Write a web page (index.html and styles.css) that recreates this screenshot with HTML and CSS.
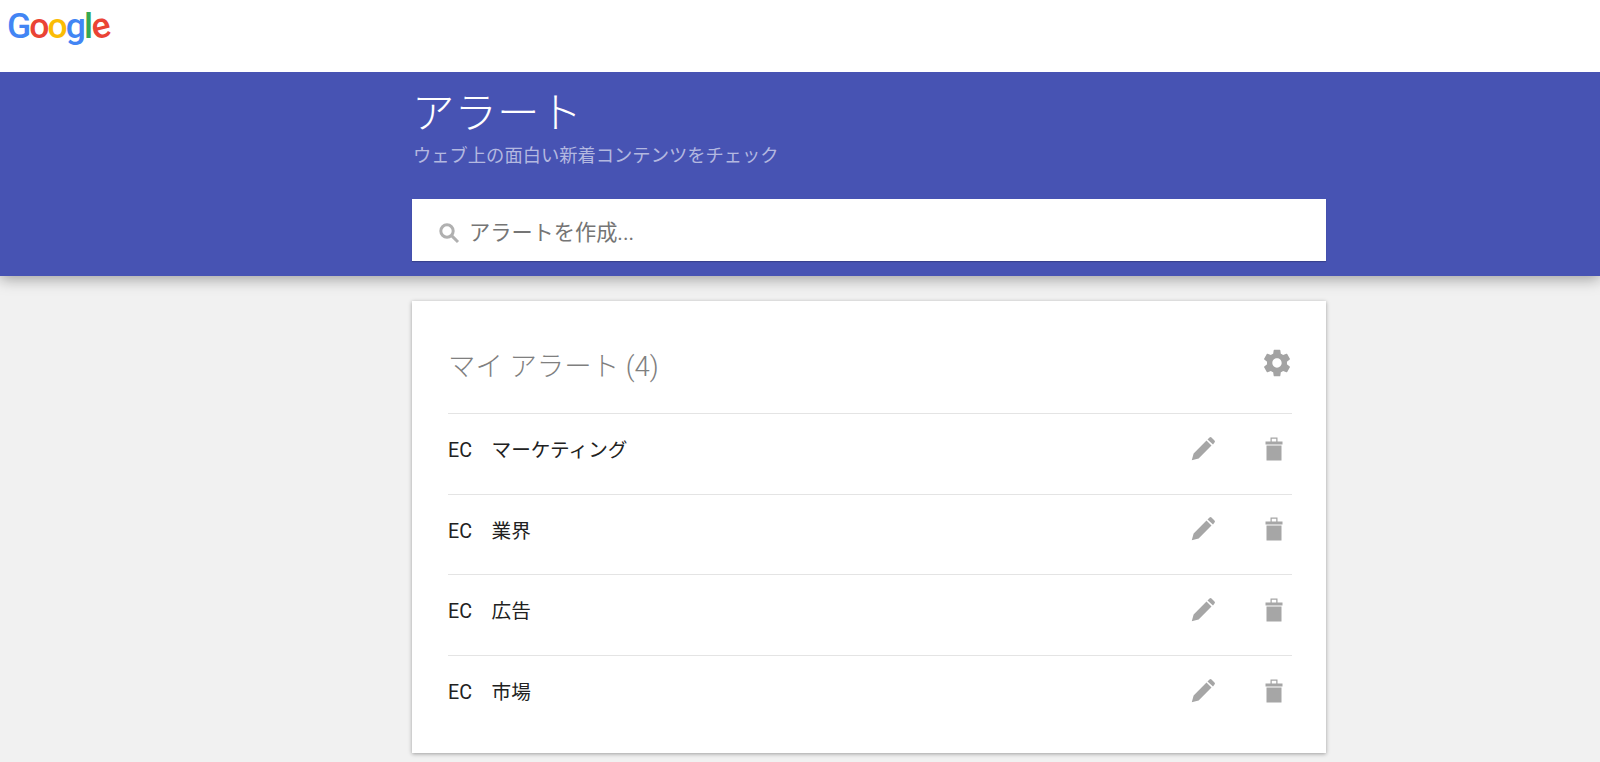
FILE: index.html
```html
<!DOCTYPE html>
<html lang="ja">
<head>
    <meta charset="UTF-8" />
    <title>Google アラート</title>
    <link rel="stylesheet" href="styles.css">
</head>
<body>
    <div class="topbar">
        <div class="logo"><span class="blue">G</span><span class="red">o</span><span class="yellow">o</span><span class="blue">g</span><span class="green">l</span><span class="red tilt">e</span></div>
    </div>

    <header class="hero">
        <div class="column">
            <h1>アラート</h1>
            <p class="subtitle">ウェブ上の面白い新着コンテンツをチェック</p>
            <div class="search">
                <svg class="search-icon" viewBox="0 0 24 24"><circle cx="10" cy="10" r="6.2"/><line x1="14.6" y1="14.6" x2="21" y2="21"/></svg>
                <span>アラートを作成...</span>
            </div>
        </div>
    </header>

    <main class="column card">
        <div class="card-head">
            <h2>マイ アラート (4)</h2>
            <svg class="gear" viewBox="0 0 24 24"><path d="M19.43 12.98c.04-.32.07-.64.07-.98s-.03-.66-.07-.98l2.11-1.65c.19-.15.24-.42.12-.64l-2-3.46c-.12-.22-.39-.3-.61-.22l-2.49 1c-.52-.4-1.08-.73-1.69-.98l-.38-2.65A.49.49 0 0 0 14 2h-4c-.25 0-.46.18-.49.42l-.38 2.65c-.61.25-1.17.59-1.69.98l-2.49-1c-.23-.09-.49 0-.61.22l-2 3.46c-.13.22-.07.49.12.64l2.11 1.65c-.04.32-.07.65-.07.98s.03.66.07.98l-2.11 1.65c-.19.15-.24.42-.12.64l2 3.46c.12.22.39.3.61.22l2.49-1c.52.4 1.08.73 1.69.98l.38 2.65c.03.24.24.42.49.42h4c.25 0 .46-.18.49-.42l.38-2.65c.61-.25 1.17-.59 1.69-.98l2.49 1c.23.09.49 0 .61-.22l2-3.46c.12-.22.07-.49-.12-.64l-2.11-1.65zM12 15.5c-1.93 0-3.5-1.57-3.5-3.5s1.57-3.5 3.5-3.5 3.5 1.57 3.5 3.5-1.57 3.5-3.5 3.5z"/></svg>
        </div>
        <div class="row">
            <span class="name">EC　マーケティング</span>
            <svg class="icon" viewBox="0 0 24 24"><path d="M3 21l1.5-5.5L14.8 5.2l4 4L8.5 19.5zM15.6 4.4l1.6-1.6q.8-.8 1.6 0l2.4 2.4q.8.8 0 1.6L20 8.4z"/></svg>
            <svg class="icon" viewBox="0 0 24 24"><path d="M6 9.2h12v12H6zM5.2 6h13.6v2.4H5.2zM9.2 6V2.8h5.6V6h-1V3.8h-3.6V6z"/></svg>
        </div>
        <div class="row">
            <span class="name">EC　業界</span>
            <svg class="icon" viewBox="0 0 24 24"><path d="M3 21l1.5-5.5L14.8 5.2l4 4L8.5 19.5zM15.6 4.4l1.6-1.6q.8-.8 1.6 0l2.4 2.4q.8.8 0 1.6L20 8.4z"/></svg>
            <svg class="icon" viewBox="0 0 24 24"><path d="M6 9.2h12v12H6zM5.2 6h13.6v2.4H5.2zM9.2 6V2.8h5.6V6h-1V3.8h-3.6V6z"/></svg>
        </div>
        <div class="row">
            <span class="name">EC　広告</span>
            <svg class="icon" viewBox="0 0 24 24"><path d="M3 21l1.5-5.5L14.8 5.2l4 4L8.5 19.5zM15.6 4.4l1.6-1.6q.8-.8 1.6 0l2.4 2.4q.8.8 0 1.6L20 8.4z"/></svg>
            <svg class="icon" viewBox="0 0 24 24"><path d="M6 9.2h12v12H6zM5.2 6h13.6v2.4H5.2zM9.2 6V2.8h5.6V6h-1V3.8h-3.6V6z"/></svg>
        </div>
        <div class="row">
            <span class="name">EC　市場</span>
            <svg class="icon" viewBox="0 0 24 24"><path d="M3 21l1.5-5.5L14.8 5.2l4 4L8.5 19.5zM15.6 4.4l1.6-1.6q.8-.8 1.6 0l2.4 2.4q.8.8 0 1.6L20 8.4z"/></svg>
            <svg class="icon" viewBox="0 0 24 24"><path d="M6 9.2h12v12H6zM5.2 6h13.6v2.4H5.2zM9.2 6V2.8h5.6V6h-1V3.8h-3.6V6z"/></svg>
        </div>
    </main>
</body>
</html>
```
FILE: styles.css
```css
body {
    margin: 0;
    height: 762px;
    overflow: hidden;
    background: #f1f1f1;
    font-family: Roboto, "Noto Sans CJK JP", sans-serif;
    color: #212121;
}

.column {
    width: 914px;
    margin-left: 412px;
}

.topbar {
    position: relative;
    z-index: 1;
    height: 72px;
    background: #fff;
    padding: 3px 0 0 7px;
    box-sizing: border-box;
}

.logo {
    font-family: Roboto, sans-serif;
    font-weight: 500;
    font-size: 35.5px;
    line-height: 46px;
    letter-spacing: -1.9px;
}

.blue { color: #4285f4; }
.red { color: #ea4335; }
.yellow { color: #fbbc05; }
.green { color: #34a853; }

.tilt {
    display: inline-block;
    transform: rotate(-14deg);
}

.hero {
    height: 204px;
    box-sizing: border-box;
    padding-top: 18px;
    background: #4753b3;
    box-shadow: 0 3px 14px rgba(0, 0, 0, 0.35);
    position: relative;
}

.hero h1 {
    margin: 0;
    font-size: 42.5px;
    line-height: 48px;
    font-weight: 300;
    color: #fff;
}

.subtitle {
    margin: 6px 0 0;
    padding-left: 1px;
    font-size: 18.3px;
    line-height: 24px;
    color: #b3b8e0;
}

.search {
    display: flex;
    align-items: center;
    gap: 8px;
    height: 62px;
    margin-top: 31px;
    padding-left: 25px;
    background: #fff;
    box-shadow: 0 1px 1px rgba(0, 0, 0, 0.2);
    font-size: 21.2px;
    color: #757575;
}

.search-icon {
    width: 24px;
    height: 24px;
    margin-top: 6px;
    fill: none;
    stroke: #b0b0b0;
    stroke-width: 3;
}

.card {
    margin-top: 25px;
    height: 452px;
    box-sizing: border-box;
    padding: 0 34px 0 36px;
    background: #fff;
    box-shadow: 0 1px 4px rgba(0, 0, 0, 0.35);
}

.card-head {
    display: flex;
    justify-content: space-between;
    align-items: center;
    height: 112px;
    box-sizing: border-box;
    padding-top: 14px;
}

.card-head h2 {
    margin: 0;
    font-size: 27.4px;
    font-weight: 300;
    color: #7f7f7f;
}

.gear {
    width: 32px;
    height: 32px;
    fill: #a3a3a3;
    margin: -2px -1px 0 0;
}

.row {
    display: flex;
    align-items: center;
    height: 80.6px;
    box-sizing: border-box;
    padding-bottom: 10px;
    border-top: 1px solid #e4e4e4;
    font-size: 19.65px;
}

.name {
    flex: 1;
}

.icon {
    width: 30px;
    height: 30px;
    fill: #a6a6a6;
    margin-left: 41px;
}

.row .icon:last-child {
    margin-right: 3px;
}
```
